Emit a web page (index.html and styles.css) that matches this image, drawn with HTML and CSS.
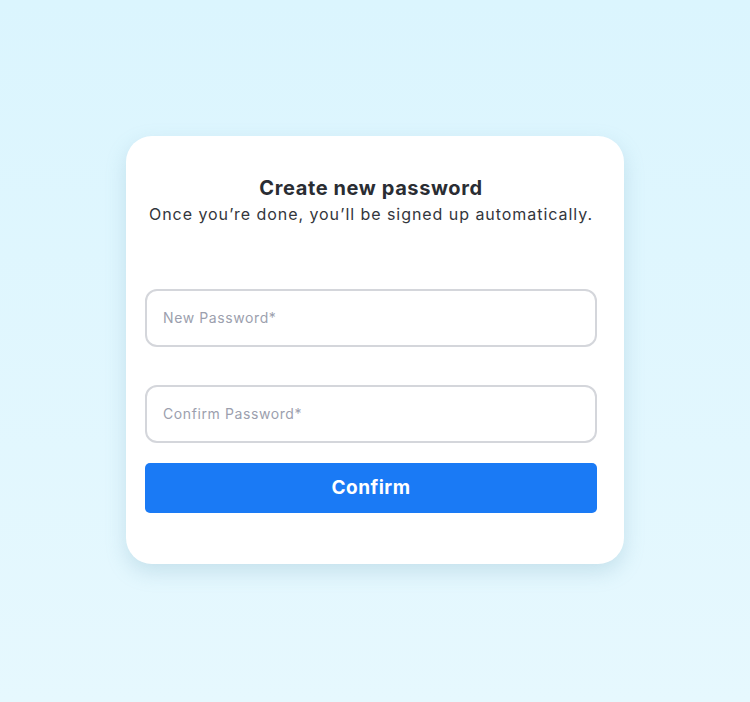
FILE: index.html
```html
<!DOCTYPE html>
<html>
<head>
<meta charset="utf-8">
<link rel="stylesheet" href="styles.css">
</head>
<body>
<main class="page">
  <section class="card">
    <header class="head">
      <h1 class="title">Create new password</h1>
      <p class="subtitle">Once you’re done, you’ll be signed up automatically.</p>
    </header>
    <form class="form">
      <input class="field" type="password" placeholder="New Password*">
      <input class="field" type="password" placeholder="Confirm Password*">
      <button class="btn" type="button">Confirm</button>
    </form>
  </section>
</main>
</body>
</html>
```

FILE: styles.css
```css
* { box-sizing: border-box; }
html, body { margin: 0; padding: 0; }
body {
  width: 750px;
  height: 702px;
  background: linear-gradient(180deg, #dbf5fe 0%, #e6f8fe 100%);
  font-family: "Inter", "Lato", sans-serif;
  color: #2a2d33;
}
.page {
  height: 702px;
  display: flex;
  justify-content: center;
  padding-top: 136px;
}
.card {
  width: 498px;
  height: 428px;
  background: #fff;
  border-radius: 26px;
  box-shadow: 0 8px 20px rgba(120, 170, 190, 0.28);
  padding: 40px 27px 0 19px;
}
.head {
  text-align: center;
}
.title {
  margin: 0;
  font-size: 20px;
  font-weight: 700;
  line-height: 24px;
  color: #2a2d33;
  letter-spacing: 0.6px;
}
.subtitle {
  margin: 4px 0 0;
  font-size: 16px;
  line-height: 21px;
  color: #33363c;
  letter-spacing: 0.95px;
}
.form {
  margin-top: 64px;
  display: flex;
  flex-direction: column;
}
.field {
  height: 58px;
  border: 2px solid #d4d6db;
  border-radius: 12px;
  padding: 0 16px 2px;
  font-family: inherit;
  font-size: 14px;
  letter-spacing: 0.6px;
  color: #333;
  outline: none;
}
.field + .field { margin-top: 38px; }
.field::placeholder { color: #9c9fae; }
.btn {
  margin-top: 20px;
  height: 50px;
  border: 0;
  border-radius: 5px;
  background: #1a7af5;
  color: #fff;
  font-family: inherit;
  font-size: 19px;
  font-weight: 700;
  letter-spacing: 0.5px;
  padding-bottom: 2px;
  cursor: pointer;
}
```
